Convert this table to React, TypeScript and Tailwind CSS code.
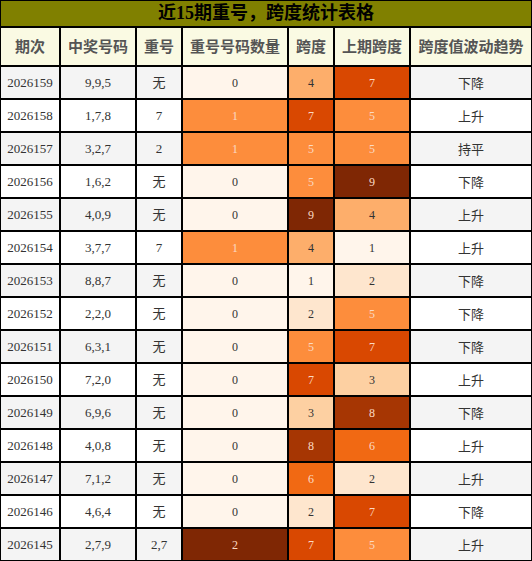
import React from "react";

const rows: [string, string, string, number, number, number, string][] = [
  ["2026159", "9,9,5", "无", 0, 4, 7, "下降"],
  ["2026158", "1,7,8", "7", 1, 7, 5, "上升"],
  ["2026157", "3,2,7", "2", 1, 5, 5, "持平"],
  ["2026156", "1,6,2", "无", 0, 5, 9, "下降"],
  ["2026155", "4,0,9", "无", 0, 9, 4, "上升"],
  ["2026154", "3,7,7", "7", 1, 4, 1, "上升"],
  ["2026153", "8,8,7", "无", 0, 1, 2, "下降"],
  ["2026152", "2,2,0", "无", 0, 2, 5, "下降"],
  ["2026151", "6,3,1", "无", 0, 5, 7, "下降"],
  ["2026150", "7,2,0", "无", 0, 7, 3, "上升"],
  ["2026149", "6,9,6", "无", 0, 3, 8, "下降"],
  ["2026148", "4,0,8", "无", 0, 8, 6, "上升"],
  ["2026147", "7,1,2", "无", 0, 6, 2, "上升"],
  ["2026146", "4,6,4", "无", 0, 2, 7, "下降"],
  ["2026145", "2,7,9", "2,7", 2, 7, 5, "上升"],
];

const spanScale: Record<number, string> = {
  0: "#fff5eb",
  1: "#fff5eb",
  2: "#fee6ce",
  3: "#fdd0a2",
  4: "#fdae6b",
  5: "#fd8d3c",
  6: "#f16913",
  7: "#d94801",
  8: "#a63603",
  9: "#7f2704",
};
const repScale: Record<number, string> = { 0: "#fff5eb", 1: "#fd8d3c", 2: "#7f2704" };

function Heat({ v, bg, light }: { v: number; bg: string; light: boolean }) {
  return (
    <div
      className={`flex items-center justify-center text-[12px] ${light ? "text-[#fbd9c3]" : "text-[#333]"}`}
      style={{ backgroundColor: bg }}
    >
      {v}
    </div>
  );
}

export default function App() {
  const headers = ["期次", "中奖号码", "重号", "重号号码数量", "跨度", "上期跨度", "跨度值波动趋势"];
  return (
    <div
      className="w-[532px] h-[561px] bg-black border border-black grid grid-cols-[58px_74px_44px_104px_44px_74px_120px] grid-rows-[25px_37px_repeat(15,31px)] gap-[2px]"
      style={{ fontFamily: '"Liberation Serif", "Noto Sans CJK SC", serif' }}
    >
      <div className="col-span-7 bg-[#808000] flex items-center justify-center text-[18px] font-bold text-black">
        近15期重号，跨度统计表格
      </div>
      {headers.map((h) => (
        <div
          key={h}
          className="bg-[#fafae3] flex items-center justify-center text-[15px] font-bold text-[#555]"
          style={{ fontFamily: '"Noto Sans CJK SC", sans-serif' }}
        >
          {h}
        </div>
      ))}
      {rows.map((r, i) => {
        const bg = i % 2 === 0 ? "bg-[#f4f4f4]" : "bg-white";
        return (
          <React.Fragment key={r[0]}>
            <div className={`${bg} flex items-center justify-center text-[13px] text-[#333]`}>{r[0]}</div>
            <div className={`${bg} flex items-center justify-center text-[13px] text-[#333]`}>{r[1]}</div>
            <div className={`${bg} flex items-center justify-center text-[13px] text-[#333]`}>{r[2]}</div>
            <Heat v={r[3]} bg={repScale[r[3]]} light={r[3] >= 1} />
            <Heat v={r[4]} bg={spanScale[r[4]]} light={r[4] >= 5} />
            <Heat v={r[5]} bg={spanScale[r[5]]} light={r[5] >= 5} />
            <div
              className={`${bg} flex items-center justify-center text-[13px] text-[#333]`}
              style={{ fontFamily: '"Noto Sans CJK SC", sans-serif' }}
            >
              {r[6]}
            </div>
          </React.Fragment>
        );
      })}
    </div>
  );
}
